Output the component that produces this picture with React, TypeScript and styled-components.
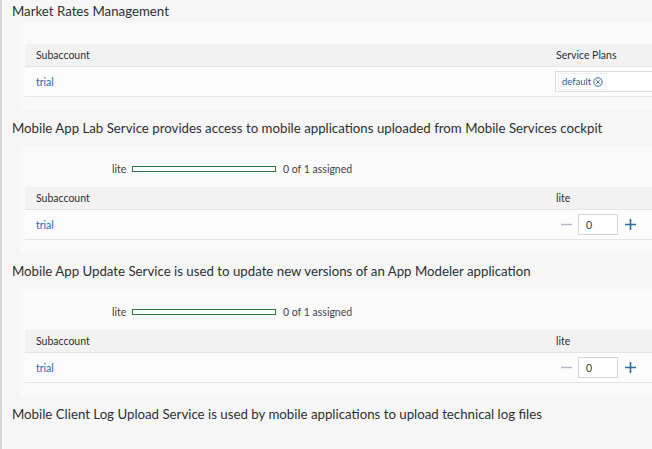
import React from "react";
import styled, { createGlobalStyle } from "styled-components";

const Global = createGlobalStyle`
  html, body { margin: 0; padding: 0; }
  body {
    background: #f6f6f7;
    font-family: "Lato", "Liberation Sans", sans-serif;
    color: #32363a;
    overflow: hidden;
  }
`;

const Page = styled.div`
  width: 652px;
  height: 449px;
  box-sizing: border-box;
  border-left: 2px solid #d3d7dc;
  overflow: hidden;
  background: #f6f6f7;
`;

const Section = styled.section`
  display: flex;
  flex-direction: column;
`;

const Title = styled.h2<{ $h: number }>`
  margin: 0;
  height: ${(p) => p.$h}px;
  display: flex;
  align-items: center;
  padding-left: 10px;
  font-size: 13.25px;
  font-weight: 400;
  color: #2c3034;
  background: #f6f6f7;
  white-space: nowrap;
`;

const Panel = styled.div<{ $top: number }>`
  margin-left: 18px;
  padding: ${(p) => p.$top}px 0 13px 5px;
  background: #fafafa;
  display: flex;
  flex-direction: column;
`;

const Usage = styled.div`
  height: 24px;
  margin-bottom: 6px;
  display: flex;
  align-items: center;
  padding-left: 87px;
  font-size: 10.5px;
  color: #3f4347;
`;

const UsageLabel = styled.span`
  width: 20px;
`;

const Bar = styled.div`
  width: 142px;
  height: 4px;
  border: 1px solid #2b7c3c;
  background: #fff;
  margin-right: 7px;
`;

const Grid = styled.div`
  display: grid;
  grid-template-columns: 1fr 107px;
`;

const HeadCell = styled.div`
  height: 23px;
  display: flex;
  align-items: center;
  padding-left: 11px;
  background: #f2f2f2;
  border-bottom: 1px solid #e4e4e4;
  box-sizing: border-box;
  font-size: 10.5px;
  color: #2c3034;
`;

const RowCell = styled.div`
  height: 30px;
  display: flex;
  align-items: center;
  padding-left: 11px;
  background: #fcfcfc;
  border-bottom: 1px solid #e4e4e4;
  box-sizing: border-box;
  font-size: 10.5px;
`;

const ValueCell = styled(RowCell)`
  padding-left: 10px;
`;

const Link = styled.a`
  color: #1c6aa6;
  text-decoration: none;
  font-size: 10.5px;
`;

const TokenBox = styled.div`
  flex: 1;
  height: 19px;
  border: 1px solid #dcdcdc;
  border-right: none;
  background: #fff;
  display: flex;
  align-items: center;
  padding-left: 2px;
`;

const Token = styled.span`
  display: inline-flex;
  align-items: center;
  gap: 2px;
  height: 15px;
  padding: 0 3px;
  border: 1px solid #eceef0;
  background: #fafbfc;
  color: #2f5f8a;
  font-size: 9.5px;
`;

const Stepper = styled.div`
  display: flex;
  align-items: center;
  padding-left: 6px;
`;

const StepBtn = styled.span<{ $on?: boolean }>`
  width: 11px;
  display: flex;
  justify-content: center;
  align-items: center;
  color: ${(p) => (p.$on ? "#2a6aa0" : "#a9b8c6")};
`;

const Input = styled.div`
  width: 40px;
  height: 21px;
  box-sizing: border-box;
  margin: 0 7px 0 6px;
  border: 1px solid #d6d6d6;
  background: #fff;
  display: flex;
  align-items: center;
  padding-left: 7px;
  font-size: 10.5px;
  color: #32363a;
`;

const CloseIcon = () => (
  <svg width="10" height="10" viewBox="0 0 10 10">
    <circle cx="5" cy="5" r="4.2" fill="none" stroke="#2f5f8a" strokeWidth="0.9" />
    <path d="M3.3 3.3 L6.7 6.7 M6.7 3.3 L3.3 6.7" stroke="#2f5f8a" strokeWidth="0.9" />
  </svg>
);

const Minus = () => (
  <svg width="11" height="11" viewBox="0 0 11 11">
    <path d="M0 5.5 H11" stroke="currentColor" strokeWidth="1.4" />
  </svg>
);

const Plus = () => (
  <svg width="11" height="11" viewBox="0 0 11 11">
    <path d="M0 5.5 H11 M5.5 0 V11" stroke="currentColor" strokeWidth="1.6" />
  </svg>
);

const QuotaSection = ({ title }: { title: string }) => (
  <Section>
    <Title $h={36}>{title}</Title>
    <Panel $top={11}>
      <Usage>
        <UsageLabel>lite</UsageLabel>
        <Bar />
        <span>0 of 1 assigned</span>
      </Usage>
      <Grid>
        <HeadCell>Subaccount</HeadCell>
        <HeadCell>lite</HeadCell>
        <RowCell>
          <Link>trial</Link>
        </RowCell>
        <ValueCell>
          <Stepper>
            <StepBtn>
              <Minus />
            </StepBtn>
            <Input>0</Input>
            <StepBtn $on>
              <Plus />
            </StepBtn>
          </Stepper>
        </ValueCell>
      </Grid>
    </Panel>
  </Section>
);

export default function App() {
  return (
    <Page>
      <Global />
      <Section>
        <Title $h={22}>Market Rates Management</Title>
        <Panel $top={22}>
          <Grid>
            <HeadCell>Subaccount</HeadCell>
            <HeadCell>Service Plans</HeadCell>
            <RowCell>
              <Link>trial</Link>
            </RowCell>
            <ValueCell>
              <TokenBox>
                <Token>
                  default <CloseIcon />
                </Token>
              </TokenBox>
            </ValueCell>
          </Grid>
        </Panel>
      </Section>
      <QuotaSection title="Mobile App Lab Service provides access to mobile applications uploaded from Mobile Services cockpit" />
      <QuotaSection title="Mobile App Update Service is used to update new versions of an App Modeler application" />
      <Section>
        <Title $h={36}>Mobile Client Log Upload Service is used by mobile applications to upload technical log files</Title>
      </Section>
    </Page>
  );
}
